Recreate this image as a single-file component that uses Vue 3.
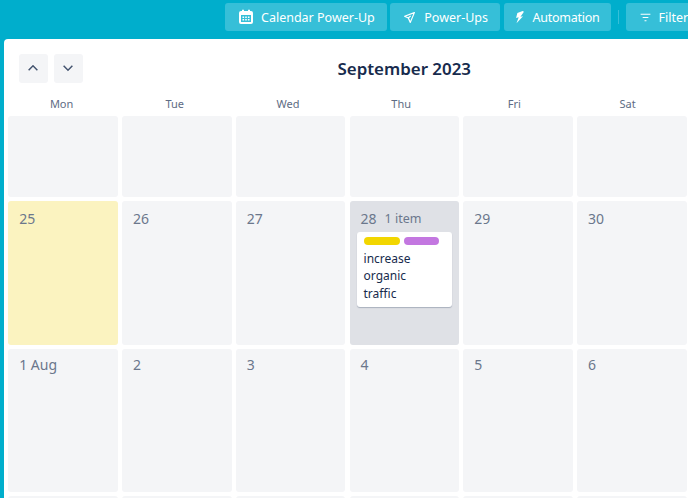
<template>
  <div class="board">
    <header class="topbar">
      <button v-for="btn in buttons" :key="btn.label" class="bar-btn" :class="btn.cls">
        <svg v-if="btn.icon === 'calendar'" class="bar-icon" viewBox="0 0 16 16" width="16" height="16">
          <path fill="#fff" fill-rule="evenodd" d="M3 2h1V.8h2V2h4V.8h2V2h1a2 2 0 0 1 2 2v9a2 2 0 0 1-2 2H3a2 2 0 0 1-2-2V4a2 2 0 0 1 2-2Zm0 4v7h10V6H3Z" />
          <path fill="#fff" d="M4.500 7.500h1.600v1.500H4.500ZM7.200 7.500h1.600v1.500H7.200ZM9.900 7.500h1.600v1.500H9.900ZM4.500 10h1.600v1.500H4.500ZM7.200 10h1.600v1.500H7.200ZM9.900 10h1.600v1.500H9.900Z" />
        </svg>
        <svg v-else-if="btn.icon === 'rocket'" class="bar-icon" viewBox="0 0 16 16" width="13" height="13">
          <path fill="none" stroke="#fff" stroke-width="1.500" stroke-linejoin="round" d="M14 2 2 6.500l4.500 2.200L9 14l5-12ZM6.500 8.700 9.500 6" />
        </svg>
        <svg v-else-if="btn.icon === 'bolt'" class="bar-icon" viewBox="0 0 16 16" width="14" height="14">
          <path fill="#fff" d="M11 1 5 3.500 3.500 9l3-.8L4 15l7.500-8-3 .6L12.500 2 11 1Z" />
        </svg>
        <svg v-else class="bar-icon" viewBox="0 0 16 16" width="13" height="13">
          <path fill="none" stroke="#fff" stroke-width="1.500" d="M2 4h12M4.500 8h7M6.800 12h2.400" />
        </svg>
        <span>{{ btn.label }}</span>
        <i v-if="btn.cls === 'has-sep'" class="sep"></i>
      </button>
    </header>

    <main class="panel">
      <div class="panel-head">
        <div class="nav">
          <button class="nav-btn" aria-label="Previous">
            <svg viewBox="0 0 16 16" width="14" height="14"><path fill="none" stroke="#44546f" stroke-width="1.700" d="m3 10.500 5-5 5 5" /></svg>
          </button>
          <button class="nav-btn" aria-label="Next">
            <svg viewBox="0 0 16 16" width="14" height="14"><path fill="none" stroke="#44546f" stroke-width="1.700" d="m3 5.500 5 5 5-5" /></svg>
          </button>
        </div>
        <h1 class="month">September 2023</h1>
      </div>

      <div class="weekdays">
        <span v-for="d in weekdays" :key="d">{{ d }}</span>
      </div>

      <div class="grid">
        <div v-for="(cell, i) in cells" :key="i" class="cell" :class="cell.cls">
          <div v-if="cell.label" class="cell-head">
            <span>{{ cell.label }}</span>
            <span v-if="cell.card" class="count">1 item</span>
          </div>
          <div v-if="cell.card" class="card">
            <div class="labels">
              <i class="lab yellow"></i>
              <i class="lab purple"></i>
            </div>
            <p>increase organic traffic</p>
          </div>
        </div>
      </div>
    </main>
  </div>
</template>

<script setup>
const buttons = [
  { label: 'Calendar Power-Up', icon: 'calendar', cls: 'btn-calendar' },
  { label: 'Power-Ups', icon: 'rocket', cls: 'btn-powerups' },
  { label: 'Automation', icon: 'bolt', cls: 'has-sep' },
  { label: 'Filter', icon: 'filter', cls: 'btn-filter' }
]

const weekdays = ['Mon', 'Tue', 'Wed', 'Thu', 'Fri', 'Sat']

const blank = { label: '' }
const cells = [
  blank, blank, blank, blank, blank, blank,
  { label: '25', cls: 'today' },
  { label: '26' },
  { label: '27' },
  { label: '28', cls: 'active', card: true },
  { label: '29' },
  { label: '30' },
  { label: '1 Aug', cls: 'next-row' },
  { label: '2', cls: 'next-row' },
  { label: '3', cls: 'next-row' },
  { label: '4', cls: 'next-row' },
  { label: '5', cls: 'next-row' },
  { label: '6', cls: 'next-row' },
  blank, blank, blank, blank, blank, blank
]
</script>

<style>
html, body {
  margin: 0;
  overflow: hidden;
}
</style>

<style scoped>
.board {
  width: 688px;
  height: 498px;
  overflow: hidden;
  background: #00aecc;
  font-family: 'Noto Sans', sans-serif;
  box-sizing: border-box;
  padding-left: 4px;
}

.topbar {
  height: 39px;
  box-sizing: border-box;
  display: flex;
  gap: 3.500px;
  padding: 3px 0 0 221px;
  white-space: nowrap;
}

.bar-btn {
  position: relative;
  flex: none;
  height: 28px;
  display: flex;
  align-items: center;
  gap: 9px;
  padding: 0 12px 0 13px;
  border: 0;
  border-radius: 3px;
  background: #36bfd8;
  color: #fff;
  font: 12.500px 'Noto Sans', sans-serif;
}

.btn-calendar {
  gap: 7px;
}

.btn-powerups {
  gap: 8px;
}

.has-sep {
  margin-right: 11.500px;
  padding: 0 11px 0 9px;
  gap: 6px;
  letter-spacing: -0.250px;
}

.btn-filter {
  gap: 7px;
}

.sep {
  position: absolute;
  right: -8px;
  top: 7px;
  width: 1px;
  height: 14px;
  background: #36bfd8;
}

.bar-icon {
  flex: none;
}

.panel {
  width: 700px;
  height: 459px;
  overflow: hidden;
  background: #fff;
  border-radius: 4px 0 0 0;
  box-sizing: border-box;
  padding: 0 4px;
}

.panel-head {
  height: 58px;
  display: flex;
  align-items: center;
}

.nav {
  display: flex;
  gap: 6.500px;
  padding-left: 11px;
}

.nav-btn {
  width: 28.500px;
  height: 29px;
  padding: 0;
  border: 0;
  border-radius: 3px;
  background: #f4f5f7;
  display: flex;
  align-items: center;
  justify-content: center;
}

.month {
  margin: 2px 0 0 255px;
  font-size: 16.900px;
  line-height: 24px;
  font-weight: 600;
  color: #172b4d;
}

.weekdays {
  display: grid;
  grid-template-columns: repeat(6, 113.200px);
  margin-left: -3px;
  height: 19px;
  text-align: center;
  font-size: 11px;
  line-height: 14px;
  color: #5e6c84;
}

.grid {
  display: grid;
  grid-template-columns: repeat(6, 109.600px);
  grid-template-rows: 81px 143.500px 143px 80px;
  gap: 4.300px 4.200px;
  margin-left: 0.200px;
}

.cell {
  background: #f4f5f7;
  border-radius: 3px;
  padding: 7.500px 7px;
  box-sizing: border-box;
  min-width: 0;
}

.cell.next-row {
  padding-top: 6px;
}

.cell.today {
  background: #fbf3c0;
}

.cell.active {
  background: #dfe1e6;
}

.cell-head {
  display: flex;
  gap: 8px;
  padding-left: 4px;
  font-size: 14px;
  line-height: 19px;
  color: #6b778c;
}

.count {
  font-size: 12.500px;
}

.card {
  margin-top: 4px;
  background: #fff;
  border-radius: 3px;
  box-shadow: 0 1px 1px rgba(9, 30, 66, 0.25);
  padding: 5px 7px 5px;
}

.labels {
  display: flex;
  gap: 4px;
  margin-bottom: 5px;
}

.lab {
  display: block;
  height: 8px;
  border-radius: 4px;
}

.lab.yellow {
  width: 36px;
  background: #f2d600;
}

.lab.purple {
  width: 35px;
  background: #c377e0;
}

.card p {
  margin: 0;
  width: 70px;
  font-size: 12px;
  line-height: 17.500px;
  color: #172b4d;
}
</style>
